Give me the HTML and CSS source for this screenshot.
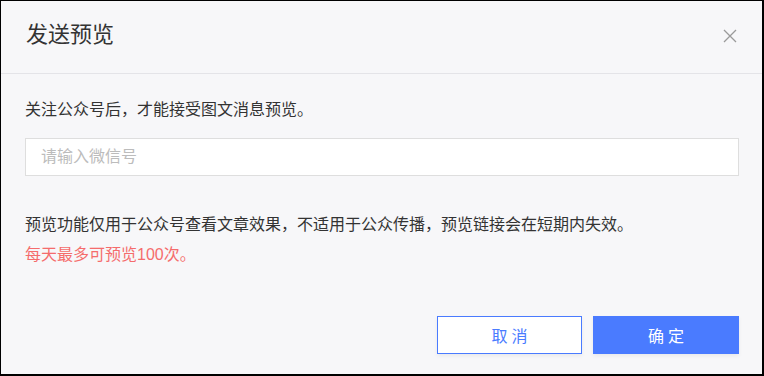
FILE: index.html
```html
<!DOCTYPE html>
<html lang="zh-CN">
<head>
  <meta charset="UTF-8">
  <meta name="viewport" content="width=device-width, initial-scale=1.0">
  <title>发送预览</title>
  <link rel="stylesheet" href="styles.css">
</head>
<body>

<div class="dialog">
  <div class="dialog-header">
    <span class="dialog-title">发送预览</span>
    <span class="close-btn">
      <svg width="14" height="14" viewBox="0 0 14 14">
        <path d="M1 1 L13 13 M13 1 L1 13" stroke="#9a9a9a" stroke-width="1.3" fill="none"/>
      </svg>
    </span>
  </div>

  <div class="dialog-body">
    <p class="tip">关注公众号后，才能接受图文消息预览。</p>
    <input type="text" class="wx-input" placeholder="请输入微信号">
    <p class="note">预览功能仅用于公众号查看文章效果，不适用于公众传播，预览链接会在短期内失效。</p>
    <p class="note warn">每天最多可预览100次。</p>

    <div class="actions">
      <button type="button" class="btn btn-cancel">取消</button>
      <button type="button" class="btn btn-ok">确定</button>
    </div>
  </div>
</div>

</body>
</html>
```

FILE: styles.css
```css
body {
  margin: 0;
  padding: 0;
  font-family: "Liberation Sans", "Noto Sans CJK SC", sans-serif;
  background-color: #000;
}

.dialog {
  width: 764px;
  height: 376px;
  box-sizing: border-box;
  border: 1px solid #000;
  border-right-width: 2px;
  border-bottom-width: 2px;
  background-color: #f7f7f9;
}

.dialog-header {
  height: 72px;
  display: flex;
  align-items: center;
  justify-content: space-between;
  padding: 0 25px 0 25px;
  border-bottom: 1px solid #e4e4e8;
}

.dialog-title {
  font-size: 22px;
  color: #333;
  line-height: 30px;
  margin-top: -4px;
}

.close-btn {
  display: flex;
  width: 14px;
  height: 14px;
  margin-top: -2px;
}

.dialog-body {
  padding: 0 23px 0 24px;
}

.tip {
  margin: 24px 0 16px;
  font-size: 16px;
  line-height: 24px;
  color: #333;
}

.wx-input {
  display: block;
  width: 100%;
  height: 38px;
  box-sizing: border-box;
  border: 1px solid #dedede;
  background-color: #fff;
  padding: 0 15px;
  font-family: inherit;
  font-size: 16px;
  color: #333;
  outline: none;
}

.wx-input::placeholder {
  color: #bcbcbc;
}

.note {
  margin: 0;
  font-size: 16px;
  line-height: 30px;
  color: #333;
}

.tip + .wx-input + .note {
  margin-top: 34px;
}

.warn {
  color: #f56c6c;
}

.actions {
  display: flex;
  justify-content: flex-end;
  gap: 11px;
  margin-top: 46px;
}

.btn {
  height: 38px;
  box-sizing: border-box;
  font-family: inherit;
  font-size: 16px;
  letter-spacing: 4px;
  padding: 0 0 0 4px;
  cursor: pointer;
  box-shadow: 0 2px 4px rgba(0, 0, 0, 0.06);
}

.btn-cancel {
  width: 145px;
  background-color: #fff;
  color: #4a7bff;
  border: 1px solid #4a7bff;
}

.btn-ok {
  width: 146px;
  background-color: #4a7bff;
  color: #fff;
  border: none;
}
```
